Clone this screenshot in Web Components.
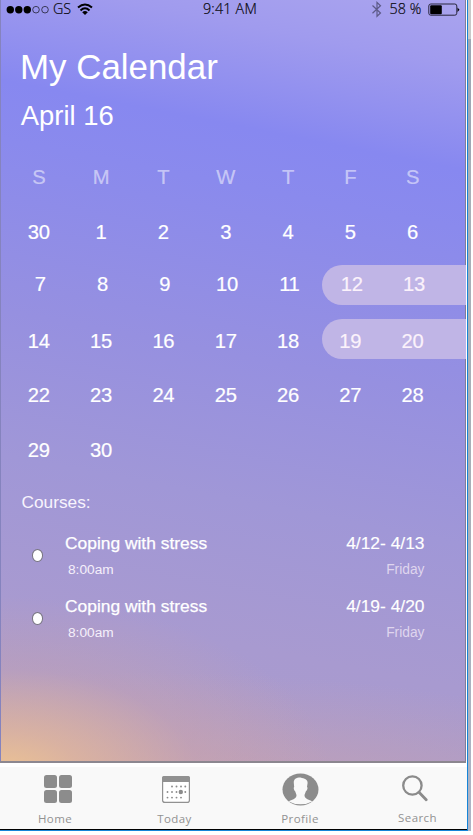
<!DOCTYPE html>
<html lang="en"><head><meta charset="utf-8"><title>My Calendar</title>
<style>html,body{margin:0;background:#fff}body{width:473px;height:835px;overflow:hidden;font-family:"Liberation Sans",Arial,sans-serif}</style></head>
<body><calendar-app></calendar-app>
<script>
const define=(name,html)=>customElements.define(name,class extends HTMLElement{
  connectedCallback(){ if(this.shadowRoot) return;
    const r=this.attachShadow({mode:'open'}); const t=document.createElement('template');
    t.innerHTML=typeof html==='function'?html(this):html; r.append(t.content.cloneNode(true)); }
});

define('status-bar',`<style>
:host{display:flex;height:20px;align-items:flex-start;color:#08080c;font:300 14.3px/18px "Open Sans","Noto Sans",sans-serif;-webkit-text-stroke:.2px #08080c;box-sizing:border-box;padding:0 6.5px 0 6px}
.l{display:flex;width:197px}.c{flex:1;letter-spacing:.2px}.r{display:flex}
svg{display:block;flex:none}.gs{margin-left:4px;letter-spacing:-.1px}.pc{margin-left:7px;letter-spacing:.05px;width:38px;white-space:nowrap}
</style>
<div class="l"><svg width="43" height="19"><g fill="#000"><circle cx="4.3" cy="9.7" r="3.7"/><circle cx="12.8" cy="9.7" r="3.7"/><circle cx="21.3" cy="9.7" r="3.7"/></g><g fill="none" stroke="#222234" stroke-width=".8"><circle cx="30" cy="9.7" r="3.3"/><circle cx="39" cy="9.7" r="3.3"/></g></svg>
<span class="gs">GS</span>
<svg style="margin-left:6px" width="16" height="19" viewBox="0 0 16 19"><g fill="none" stroke="#000" stroke-width="2"><path d="M1 7.6Q8 1.3 15 7.6"/><path d="M3.5 10.4Q8 6.2 12.5 10.4"/></g><path d="M5.2 12.2Q8 9.8 10.8 12.2L8 15Z"/></svg></div>
<span class="c">9:41 AM</span>
<div class="r"><svg width="12" height="19" viewBox="0 0 12 19"><path d="M1.5 5.5L9.5 13 6 16.3V2.3L9.5 5.7 1.5 13.2" fill="none" stroke="#5d5a88" stroke-width="1.2"/></svg>
<span class="pc">58 %</span>
<svg width="32" height="19"><rect x=".8" y="4" width="28" height="11.2" rx="2" fill="none" stroke="#28263c" stroke-width="1"/><rect x="2.2" y="5.2" width="11.6" height="9" rx="1"/><path d="M29.5 7.5L31.5 9.7 29.5 12Z"/></svg></div>`);

define('page-heading',`<style>:host{display:block;color:#fff;padding:22px 0 0 20px;height:107.5px;box-sizing:content-box}
h1,h2{margin:0;font-weight:400;white-space:nowrap}h1{font-size:34.9px;line-height:50px}h2{font-size:27.4px;line-height:34px;margin-top:6.5px;padding-left:.8px}</style>
<h1><slot name="title"></slot></h1><h2><slot name="date"></slot></h2>`);

define('week-row',e=>`<style>
:host{position:relative;display:grid;grid-template-columns:repeat(7,62.3px);align-items:center;justify-items:center;box-sizing:border-box;height:${e.getAttribute('h')}px;padding-left:${e.getAttribute('x')||7.6}px;color:${e.hasAttribute('head')?'rgba(255,255,255,.5)':'#fff'};font-size:20.2px;line-height:22px}
.pill{position:absolute;left:322px;right:0;top:${e.getAttribute('pill')}px;height:40px;border-radius:20px 0 0 20px;background:#c0b5e6}
span{position:relative;letter-spacing:-.3px;-webkit-text-stroke:.2px currentColor}.in{color:#fbf2fb}
</style>${e.hasAttribute('pill')?'<div class="pill"></div>':''}${e.getAttribute('days').split(' ').map((d,i)=>`<span${e.hasAttribute('pill')&&i>4?' class="in"':''}>${d}</span>`).join('')}`);

define('course-item',`<style>
:host{display:grid;grid-template-columns:65px 1fr auto;grid-template-rows:26px 27px;align-items:center;height:62.8px;box-sizing:border-box;padding-right:41.5px;color:#fff;font-size:17.4px;line-height:20px;align-content:start}
i{grid-row:1/3;align-self:center;width:9px;height:10.5px;border:1.5px solid #777480;border-radius:50%;background:#fff;margin-left:31.5px;margin-top:-2px}
.n{-webkit-text-stroke:.25px #fff}.w{-webkit-text-stroke:.15px #fff}.t{grid-column:2;font-size:13.7px;padding-left:3px;color:#f5f0fb}.d{font-size:13.8px;text-align:right;color:#dfd5ee}
.d,.t{line-height:16px;padding-top:1px}</style>
<i></i><span class="n"><slot></slot></span><span class="w"><slot name="dates"></slot></span><span class="t"><slot name="time"></slot></span><span class="d"><slot name="day"></slot></span>`);

const icons={
home:`<svg width="28" height="28"><g fill="#8c8c8c"><rect width="13" height="13" rx="2.5"/><rect x="15" width="13" height="13" rx="2.5"/><rect y="15" width="13" height="13" rx="2.5"/><rect x="15" y="15" width="13" height="13" rx="2.5"/></g></svg>`,
today:`<svg width="28" height="27"><rect x=".6" y=".6" width="26.8" height="25.8" rx="2.2" fill="#fff" stroke="#919191" stroke-width="1.2"/><path d="M0 6V2Q0 0 2 0H26Q28 0 28 2V6Z" fill="#919191"/><g fill="#8b8b8b">${[[10,10.5],[14.5,10.5],[19,10.5],[23.3,10.5],[5.5,16],[10,16],[14.5,16],[23.3,16],[5.5,21.6],[10,21.6],[14.5,21.6],[19,21.6]].map(p=>`<circle cx="${p[0]}" cy="${p[1]}" r=".95"/>`).join('')}<circle cx="18.8" cy="16" r="2.2"/></g></svg>`,
profile:`<svg width="37" height="33" viewBox="0 0 37 33"><ellipse cx="18.5" cy="16.5" rx="18" ry="16" fill="#8c8c8c"/><path d="M18.5 4.5C14 4.5 11.6 6 11.8 10L12.2 14C11.3 14.3 12 17.5 13 18C13.7 20 14.5 21 14.5 22.5C14.2 26.2 9.5 26.8 6.8 28.4Q12 31.3 18.5 31.3T30.2 28.4C27.5 26.8 22.8 26.2 22.5 22.5C22.5 21 23.5 20 24 18C25.4 17.5 26 14.3 25 14L25.6 10C25.8 6.3 22.5 5.6 18.5 4.5Z" fill="#f9f9f9"/></svg>`,
search:`<svg width="26" height="27"><g fill="none" stroke="#8b8b8b"><circle cx="10.4" cy="10.5" r="9.2" stroke-width="2.3"/><path d="M17 17.2L24.2 24.7" stroke-width="2.8" stroke-linecap="round"/></g></svg>`};
define('tab-item',e=>`<style>
:host{display:flex;flex-direction:column;align-items:center;color:#929292;font:400 11.5px/16px "Open Sans","Noto Sans",sans-serif;letter-spacing:.4px}
.i{height:43.5px;display:flex;align-items:center;justify-content:center}svg{display:block}span{margin-left:${e.getAttribute('shift')||0}px}</style><div class="i">${icons[e.getAttribute('icon')]}</div><span><slot></slot></span>`);

define('tab-bar',`<style>:host{display:grid;grid-template-columns:115px 122px 126px 104px;height:62px;background:#f9f9f9;border-bottom:1px solid #000;box-sizing:content-box}
::slotted(*){padding-top:.5px}</style><slot></slot>`);

define('calendar-app',`<style>
:host{display:grid;grid-template-columns:467px 1px 3px;width:471px;height:831px}
.main{display:flex;flex-direction:column;height:831px;overflow:hidden}
.screen{width:466px;height:763px;box-sizing:border-box;border-bottom:2px solid #8c8790;flex:none;box-shadow:inset 1px 0 #8583be,inset -1px 0 #817d97;
background:radial-gradient(ellipse 330px 180px at 0 102%,rgba(238,196,146,1) 0%,rgba(228,184,152,.75) 25%,rgba(208,165,165,.35) 60%,rgba(190,155,185,0) 100%),
radial-gradient(ellipse 600px 150px at 30% 108%,rgba(208,165,168,.8),rgba(205,163,172,0)),
linear-gradient(191deg,#aaa4ee 0%,#a09bee 8%,#8788f0 20%,#8a8aed 27%,#9690e0 47%,#a097d7 64%,#a89ad0 81%,#aa9bc9 100%)}
.courses{color:#f8f4fd;font-size:17.3px;line-height:20px;padding:8.5px 0 0 21.5px;height:46.5px;box-sizing:border-box}
.gap{height:4px;flex:none}.blue{background:#1685d8}.side{background:linear-gradient(#c9c9c9 0 39px,#a0a7b5 39px 160px,#a9afb8 160px 480px,#aeb4c6)}
.base{height:1px;background:#1685d8}
</style>
<div class="main"><div class="screen">
<status-bar></status-bar>
<page-heading><span slot="title">My Calendar</span><span slot="date">April 16</span></page-heading>
<week-row head h="55" days="S M T W T F S"></week-row>
<week-row h="55" days="30 1 2 3 4 5 6"></week-row>
<week-row h="49" x="9" pill="5.5" days="7 8 9 10 11 12 13"></week-row>
<week-row h="65" pill="10.5" days="14 15 16 17 18 19 20"></week-row>
<week-row h="43" days="22 23 24 25 26 27 28"></week-row>
<week-row h="67" days="29 30"></week-row>
<div class="courses">Courses:</div>
<course-item>Coping with stress<span slot="dates">4/12- 4/13</span><span slot="time">8:00am</span><span slot="day">Friday</span></course-item>
<course-item>Coping with stress<span slot="dates">4/19- 4/20</span><span slot="time">8:00am</span><span slot="day">Friday</span></course-item>
</div><div class="gap"></div>
<tab-bar><tab-item icon="home" shift="-5">Home</tab-item><tab-item icon="today" shift="-3">Today</tab-item><tab-item icon="profile">Profile</tab-item><tab-item icon="search" shift="5" style="margin-top:-1px">Search</tab-item></tab-bar>
<div class="base"></div></div><div class="blue"></div><div class="side"></div>`);
</script></body></html>
